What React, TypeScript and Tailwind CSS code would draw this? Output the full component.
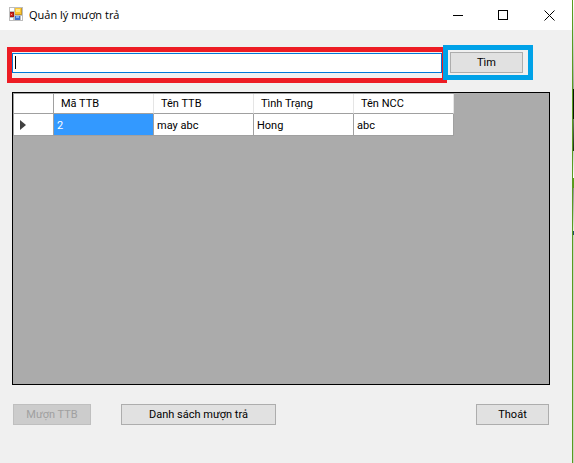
const columns = ['Mã TTB', 'Tên TTB', 'Tình Trạng', 'Tên NCC'];
const rows = [['2', 'may abc', 'Hong', 'abc']];

function AppIcon() {
  return (
    <svg className="mb-0.5" width="14" height="14" viewBox="0 0 14 14" shapeRendering="crispEdges" aria-hidden="true">
      <rect width="14" height="14" fill="#bdbdbd" />
      <rect x="1" y="1" width="4" height="3" fill="#fff" />
      <rect x="1" y="11" width="3" height="2" fill="#fff" />
      <rect x="12" y="9" width="1" height="4" fill="#fff" />
      <rect x="1" y="5" width="4" height="5" fill="#a31515" />
      <rect x="1" y="6" width="3" height="3" fill="#d02a20" />
      <rect x="2" y="7" width="1" height="1" fill="#f4a08c" />
      <rect x="6" y="1" width="7" height="7" fill="#c99a2a" />
      <rect x="6" y="1" width="6" height="6" fill="#fbc530" />
      <rect x="7" y="2" width="4" height="3" fill="#ffe68a" />
      <rect x="6" y="9" width="5" height="4" fill="#3f6fce" />
      <rect x="7" y="9" width="3" height="2" fill="#7fb0f5" />
    </svg>
  );
}

function TitleBar() {
  return (
    <header className="flex h-[30px] items-center bg-white pl-[9px]">
      <AppIcon />
      <h1 className="ml-1.5 flex-1 font-['Open_Sans','Noto_Sans',sans-serif] text-[11px]">Quản lý mượn trả</h1>
      <button type="button" aria-label="Minimize" className="grid h-full w-[45px] place-items-center">
        <svg width="11" height="11" shapeRendering="crispEdges"><path d="M0 5h10v1H0z" /></svg>
      </button>
      <button type="button" aria-label="Maximize" className="grid h-full w-[45px] place-items-center">
        <svg width="11" height="11" shapeRendering="crispEdges" fill="none" stroke="#000"><path d="M.5 .5h9v9h-9z" /></svg>
      </button>
      <button type="button" aria-label="Close" className="grid h-full w-[46px] place-items-center">
        <svg width="11" height="11" fill="none" stroke="#000"><path d="M.5 .5l10 10M10.5 .5l-10 10" /></svg>
      </button>
    </header>
  );
}

const buttonStyle = 'h-[21px] border border-[#adadad] bg-[#e1e1e1] pt-px leading-[18px]';

export default function App() {
  return (
    <div className="flex min-h-screen bg-[#f0f0f0] font-['Roboto','Liberation_Sans',sans-serif] text-[11px] text-black">
      <div className="flex min-w-0 flex-1 flex-col">
        <TitleBar />
        <main className="flex flex-1 flex-col pr-[22px] pb-[38px] pl-3">
          <form className="-ml-[5px] mr-[17px] mt-[15px] flex h-[38px] items-start">
            <div className="relative mt-0.5 h-9 min-w-0 flex-1 border-[5px] border-[#ed1c24] pt-px">
              <input
                aria-label="Tìm kiếm"
                className="block h-5 w-full border border-[#0078d7] bg-white px-0.5 caret-transparent outline-none"
              />
              <span className="absolute top-1 left-[3px] h-[13px] w-px bg-black" aria-hidden="true" />
            </div>
            <div className="relative -ml-1 h-[35px] w-[90px] border-[5px] border-[#00a2e8] pt-0.5 pl-0.5">
              <button type="button" className={`${buttonStyle} block w-[73px]`}>Tìm</button>
            </div>
          </form>

          <section className="mt-[9px] flex-1 border border-black bg-[#ababab]">
            <table className="w-[441px] table-fixed border-separate border-spacing-0 border-t border-l border-[#a0a0a0] text-left">
              <thead>
                <tr className="h-5 bg-white">
                  <th className="w-10 border-r border-b border-[#a0a0a0] p-0" aria-label="Dòng" />
                  {columns.map((name) => (
                    <th key={name} className="border-r border-b border-r-[#e5e5e5] border-b-[#a0a0a0] p-0 pt-px pl-[7px] font-normal leading-[18px]">
                      {name}
                    </th>
                  ))}
                </tr>
              </thead>
              <tbody>
                {rows.map((row) => (
                  <tr key={row[0]} className="h-[22px] bg-white">
                    <th className="border-r border-b border-[#a0a0a0] p-0 pl-1.5">
                      <svg width="6" height="10" fill="#404040"><path d="M0 0l6 5-6 5z" /></svg>
                    </th>
                    {row.map((value, i) => (
                      <td
                        key={i}
                        className={`border-r border-b border-[#a0a0a0] p-0 pt-0.5 pl-[3px] leading-[18px] ${i === 0 ? 'bg-[#3399ff] text-white' : ''}`}
                      >
                        {value}
                      </td>
                    ))}
                  </tr>
                ))}
              </tbody>
            </table>
          </section>

          <footer className="mt-[19px] flex pr-px pl-px">
            <button type="button" disabled className="h-[21px] w-[78px] border border-[#bfbfbf] bg-[#cccccc] pt-px leading-[18px] text-[#a0a0a0]">
              Mượn TTB
            </button>
            <button type="button" className={`${buttonStyle} ml-[30px] w-[155px]`}>Danh sách mượn trả</button>
            <button type="button" className={`${buttonStyle} ml-auto w-[73px]`}>Thoát</button>
          </footer>
        </main>
      </div>
      <div className="w-px bg-[#5b9a1e]" />
      <div className="flex w-px flex-col bg-[#c9d3c0]" aria-hidden="true">
        <div className="h-[89px] bg-linear-to-b from-white to-[#9aa39a]" />
        <div className="h-[30px] bg-[#0a140a]" />
        <div className="h-8 bg-linear-to-b from-[#6b7a6b] to-[#1a2a1a]" />
        <div className="h-[27px] bg-linear-to-b from-[#c8c8c8] to-white" />
        <div className="h-2.5 bg-[#5b9a1e]" />
        <div className="h-[43px] bg-linear-to-b from-[#8a8a8a] to-[#e8efe2]" />
        <div className="h-1 bg-[#20506a]" />
      </div>
    </div>
  );
}
